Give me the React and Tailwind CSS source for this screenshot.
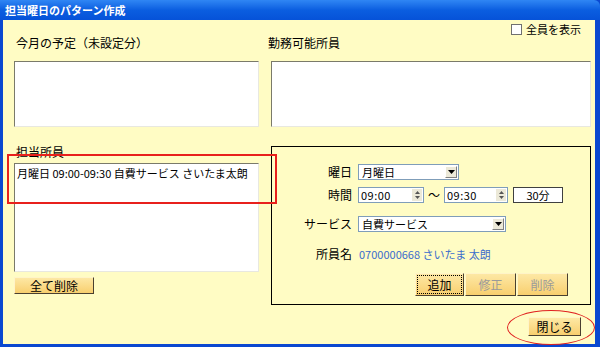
import React from "react"

const jp = { fontFamily: '"Noto Sans CJK JP", "Noto Sans", sans-serif' }

const ListBox = ({ className, children }) => (
    <div className={`bg-white border border-t-[#7a7a6a] border-l-[#7a7a6a] border-r-[#e8e8e0] border-b-[#e8e8e0] ${className}`}>
        {children}
    </div>
)

const Arrow = () => (
    <div className="w-[12px] h-[12px] mr-[1px] bg-[#ece9d8] border border-t-white border-l-white border-r-[#808080] border-b-[#808080] flex items-center justify-center">
        <svg width="7" height="4" viewBox="0 0 7 4"><path d="M0 0h7L3.5 4z" fill="#000" /></svg>
    </div>
)

const Select = ({ value, className }) => (
    <div className={`h-[16px] bg-white border border-[#7f9db9] flex items-center justify-between ${className}`}>
        <span className="pl-[3px] text-[11px] leading-[14px] text-black">{value}</span>
        <Arrow />
    </div>
)

const Spin = ({ value, className }) => (
    <div className={`h-[16px] bg-white border border-[#7f9db9] flex items-center justify-between ${className}`}>
        <span className="pl-[2px] text-[11px] leading-[14px] text-black tracking-[0.5px]">{value}</span>
        <div className="w-[10px] h-[12px] mr-[1px] bg-[#ece9d8] flex flex-col items-center justify-center gap-[2px]">
            <svg width="5" height="3" viewBox="0 0 5 3"><path d="M0 3h5L2.5 0z" fill="#555" /></svg>
            <svg width="5" height="3" viewBox="0 0 5 3"><path d="M0 0h5L2.5 3z" fill="#555" /></svg>
        </div>
    </div>
)

const Btn = ({ children, className, dim }) => (
    <button className={`bg-gradient-to-b from-[#fde8a4] to-[#f8cf6e] border border-t-[#fff4c8] border-l-[#fff4c8] border-r-[#4a4030] border-b-[#4a4030] text-[12px] leading-none flex items-center justify-center ${dim ? 'text-[#9a9a9a]' : 'text-black'} ${className}`}>
        {children}
    </button>
)

export default function App() {
    return (
        <div className="w-[600px] h-[347px] bg-[#0a48d0] flex flex-col overflow-hidden" style={jp}>
            {/* Title bar */}
            <div className="h-[20px] rounded-tr-[6px] bg-gradient-to-b from-[#2f86f4] via-[#0b5ee0] to-[#0652d8] flex items-center pl-[5px]">
                <span className="text-white text-[11px] font-bold leading-none">担当曜日のパターン作成</span>
            </div>

            {/* Body */}
            <div className="relative flex-1 ml-[3px] mr-[5px] mb-[3px] bg-[#fffcc4] pt-[3px] flex flex-col">
                {/* Show all */}
                <div className="h-[13px] flex items-center justify-end pr-[14px] gap-[4px]">
                    <div className="w-[11px] h-[11px] bg-white border border-[#707070]" />
                    <span className="text-[11px] leading-none text-black">全員を表示</span>
                </div>

                {/* Headers */}
                <div className="h-[14px] flex text-[12px] leading-[14px] text-black">
                    <div className="w-[265px] pl-[13px]">今月の予定（未設定分）</div>
                    <div>勤務可能所員</div>
                </div>

                {/* Top lists */}
                <div className="mt-[11px] flex pl-[11px] gap-[12px]">
                    <ListBox className="w-[245px] h-[66px]" />
                    <ListBox className="w-[320px] h-[66px]" />
                </div>

                {/* Bottom section */}
                <div className="mt-[19px] flex pl-[11px] gap-[12px]">
                    <div className="w-[245px] flex flex-col">
                        <div className="h-[17px] pl-[2px] text-[12px] leading-[12px] text-black">担当所員</div>
                        <ListBox className="h-[109px] pl-[2px] pt-[2px]">
                            <div className="text-[11px] leading-[14px] text-black">月曜日 09:00-09:30 自費サービス さいたま太朗</div>
                        </ListBox>
                        <Btn className="mt-[5px] w-[80px] h-[17px]">全て削除</Btn>
                    </div>

                    <div className="w-[320px] h-[159px] border border-black flex flex-col pt-[17px] pr-[22px]">
                        <div className="flex items-center h-[16px]">
                            <div className="w-[80px] text-right text-[12px] text-black">曜日</div>
                            <Select value="月曜日" className="ml-[6px] w-[101px]" />
                        </div>
                        <div className="flex items-center h-[16px] mt-[7px]">
                            <div className="w-[80px] text-right text-[12px] text-black">時間</div>
                            <Spin value="09:00" className="ml-[6px] w-[66px]" />
                            <span className="w-[20px] text-center text-[12px] text-black">～</span>
                            <Spin value="09:30" className="w-[64px]" />
                            <div className="ml-[5px] w-[50px] h-[16px] bg-white border border-[#404040] text-[11px] leading-[14px] text-center text-black">30分</div>
                        </div>
                        <div className="flex items-center h-[16px] mt-[13px]">
                            <div className="w-[80px] text-right text-[12px] text-black">サービス</div>
                            <Select value="自費サービス" className="ml-[6px] w-[148px]" />
                        </div>
                        <div className="flex items-center h-[16px] mt-[14px]">
                            <div className="w-[80px] text-right text-[12px] text-black">所員名</div>
                            <span className="ml-[7px] text-[11px] text-[#3a6ccc]">0700000668 さいたま 太朗</span>
                        </div>
                        <div className="mt-[11px] flex justify-end gap-[1px]">
                            <Btn className="w-[49px] h-[23px] outline-1 outline-dotted outline-black -outline-offset-[3px]">追加</Btn>
                            <Btn className="w-[51px] h-[23px]" dim>修正</Btn>
                            <Btn className="w-[51px] h-[23px]" dim>削除</Btn>
                        </div>
                    </div>
                </div>

                {/* Close */}
                <div className="mt-[12px] flex justify-end pr-[14px]">
                    <Btn className="w-[53px] h-[19px]">閉じる</Btn>
                </div>

                {/* Annotations */}
                <div className="absolute left-[4px] top-[134px] w-[270px] h-[50px] border-2 border-[#e8201c] pointer-events-none" />
                <div className="absolute left-[504px] top-[290px] w-[88px] h-[35px] rounded-[50%] border-[1.5px] border-[#e02020] pointer-events-none" />
            </div>
        </div>
    )
}
